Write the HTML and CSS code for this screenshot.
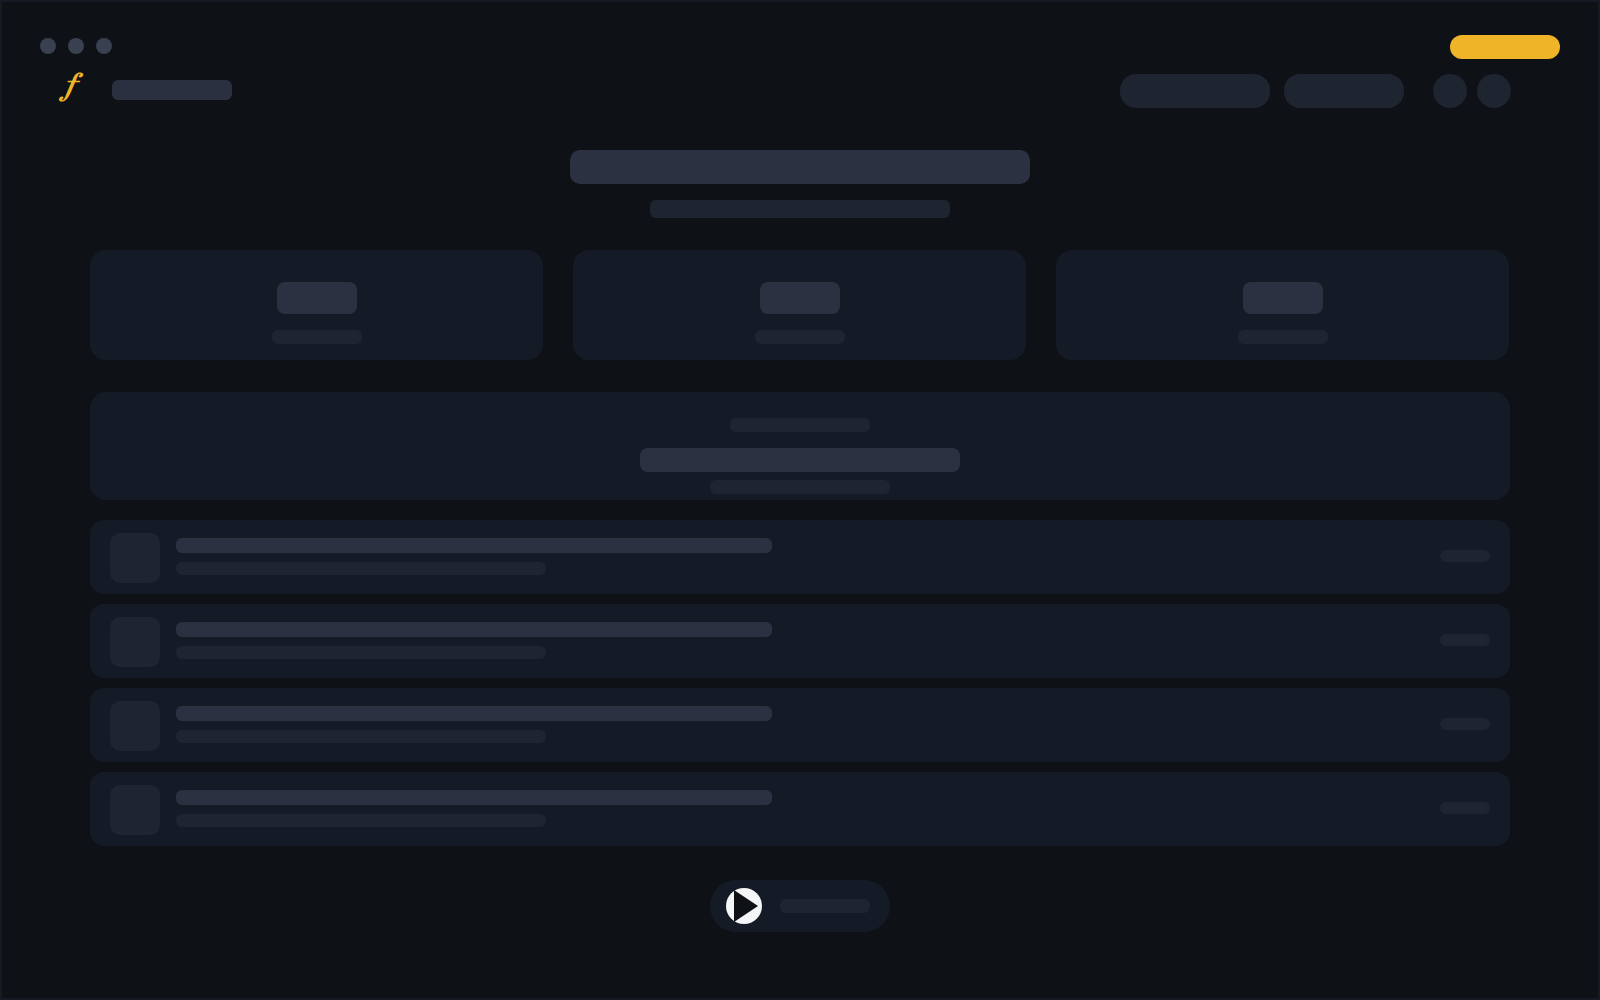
FILE: index.html
```html
<!DOCTYPE html>
<html lang="en">
<head>
    <meta charset="UTF-8">
    <title>Dashboard</title>
    <link rel="stylesheet" href="styles.css">
</head>
<body>
<div class="window">
    <div class="titlebar">
        <div class="dots">
            <span class="dot"></span>
            <span class="dot"></span>
            <span class="dot"></span>
        </div>
        <button class="cta" type="button" aria-label="Get started"></button>
    </div>
    <header class="header">
        <a class="brand" href="#" aria-label="Home">
            <span class="logo">𝒇</span>
            <span class="brand-name"></span>
        </a>
        <nav class="nav">
            <button class="pill pill-wide" type="button" aria-label="Search"></button>
            <button class="pill" type="button" aria-label="Filter"></button>
            <div class="nav-icons">
                <button class="round" type="button" aria-label="Theme"></button>
                <button class="round" type="button" aria-label="Account"></button>
            </div>
        </nav>
    </header>
    <main class="content">
        <div class="hero">
            <div class="hero-title"></div>
            <div class="hero-sub"></div>
        </div>
        <div class="stats">
            <div class="stat"><span class="stat-value"></span><span class="line stat-label"></span></div>
            <div class="stat"><span class="stat-value"></span><span class="line stat-label"></span></div>
            <div class="stat"><span class="stat-value"></span><span class="line stat-label"></span></div>
        </div>
        <div class="featured">
            <span class="line featured-tag"></span>
            <span class="featured-title"></span>
            <span class="line featured-sub"></span>
        </div>
        <ul class="list">
            <li class="row">
                <span class="thumb"></span>
                <div class="row-text"><span class="row-title"></span><span class="row-sub"></span></div>
                <span class="row-time"></span>
            </li>
            <li class="row">
                <span class="thumb"></span>
                <div class="row-text"><span class="row-title"></span><span class="row-sub"></span></div>
                <span class="row-time"></span>
            </li>
            <li class="row">
                <span class="thumb"></span>
                <div class="row-text"><span class="row-title"></span><span class="row-sub"></span></div>
                <span class="row-time"></span>
            </li>
            <li class="row">
                <span class="thumb"></span>
                <div class="row-text"><span class="row-title"></span><span class="row-sub"></span></div>
                <span class="row-time"></span>
            </li>
        </ul>
        <div class="player">
            <button class="play" type="button" aria-label="Play">
                <svg width="36" height="36" viewBox="0 0 36 36"><path d="M8 2L32 18L8 34Z" fill="#0e1116"/></svg>
            </button>
            <span class="line player-label"></span>
        </div>
    </main>
</div>
</body>
</html>
```

FILE: styles.css
```css
*{
    box-sizing: border-box;
    padding: 0;
    margin: 0;
}
body{
    background: #0e1116;
    font-family: "Liberation Serif", serif;
}
button{
    border: none;
    cursor: pointer;
}
ul,li{
    list-style: none;
}
.window{
    min-height: 100vh;
    border: 2px solid #151a25;
}
.titlebar{
    display: flex;
    justify-content: space-between;
    align-items: flex-start;
    padding: 33px 38px 0;
}
.dots{
    display: flex;
    gap: 12px;
    padding-top: 3px;
}
.dot{
    width: 16px;
    height: 16px;
    border-radius: 50%;
    background: #394050;
}
.cta{
    width: 110px;
    height: 24px;
    border-radius: 12px;
    background: #f0b429;
}
.header{
    display: flex;
    justify-content: space-between;
    align-items: flex-start;
    margin-top: 15px;
    padding: 0 87px 0 56px;
}
.brand{
    display: flex;
    align-items: center;
    height: 32px;
    text-decoration: none;
}
.logo{
    width: 54px;
    padding-bottom: 10px;
    color: #f0b429;
    font-family: math;
    font-size: 32px;
    font-style: italic;
    line-height: 32px;
}
.brand-name{
    width: 120px;
    height: 20px;
    border-radius: 6px;
    background: #2b3040;
}
.nav{
    display: flex;
    gap: 14px;
}
.pill{
    width: 120px;
    height: 34px;
    border-radius: 16px;
    background: #1e2430;
}
.pill-wide{
    width: 150px;
}
.nav-icons{
    display: flex;
    gap: 10px;
    margin-left: 15px;
}
.round{
    width: 34px;
    height: 34px;
    border-radius: 50%;
    background: #1e2430;
}
.content{
    padding: 42px 88px 0;
}
.hero{
    display: flex;
    flex-direction: column;
    align-items: center;
    gap: 16px;
}
.hero-title{
    width: 460px;
    height: 34px;
    border-radius: 10px;
    background: #2c3141;
}
.hero-sub{
    width: 300px;
    height: 18px;
    border-radius: 6px;
    background: #1e2430;
}
.line{
    height: 14px;
    border-radius: 6px;
    background: #1f2530;
}
.stats{
    display: grid;
    grid-template-columns: repeat(3, 1fr);
    gap: 30px;
    margin-top: 32px;
    padding-right: 1px;
}
.stat{
    display: flex;
    flex-direction: column;
    align-items: center;
    gap: 16px;
    padding: 32px 0 16px;
    border-radius: 16px;
    background: #151b26;
}
.stat-value{
    width: 80px;
    height: 32px;
    border-radius: 8px;
    background: #2c3141;
}
.stat-label{
    width: 90px;
}
.featured{
    display: flex;
    flex-direction: column;
    align-items: center;
    margin-top: 32px;
    padding: 26px 0 6px;
    border-radius: 16px;
    background: #151b26;
}
.featured-tag{
    width: 140px;
}
.featured-title{
    width: 320px;
    height: 24px;
    margin: 16px 0 8px;
    border-radius: 8px;
    background: #2c3141;
}
.featured-sub{
    width: 180px;
}
.list{
    display: grid;
    gap: 10px;
    margin-top: 20px;
}
.row{
    display: grid;
    grid-template-columns: 50px 1fr 50px;
    column-gap: 16px;
    padding: 13px 20px 11px;
    border-radius: 14px;
    background: #151b26;
}
.thumb{
    width: 50px;
    height: 50px;
    border-radius: 10px;
    background: #1f2530;
}
.row-text{
    max-width: 596px;
    padding-top: 5px;
}
.row-title,.row-sub{
    display: block;
}
.row-title{
    height: 15px;
    border-radius: 6px;
    background: #2c3141;
}
.row-sub{
    width: 62%;
    height: 13px;
    margin-top: 9px;
    border-radius: 6px;
    background: #1f2530;
}
.row-time{
    height: 12px;
    margin-top: 17px;
    border-radius: 6px;
    background: #1f2530;
}
.player{
    display: flex;
    align-items: center;
    gap: 18px;
    width: 180px;
    height: 52px;
    margin: 34px auto 0;
    padding: 0 16px;
    border-radius: 26px;
    background: #151b26;
}
.play{
    width: 36px;
    height: 36px;
    border-radius: 50%;
    background: #f5f6f8;
}
.play svg{
    display: block;
}
.player-label{
    width: 90px;
}
```
